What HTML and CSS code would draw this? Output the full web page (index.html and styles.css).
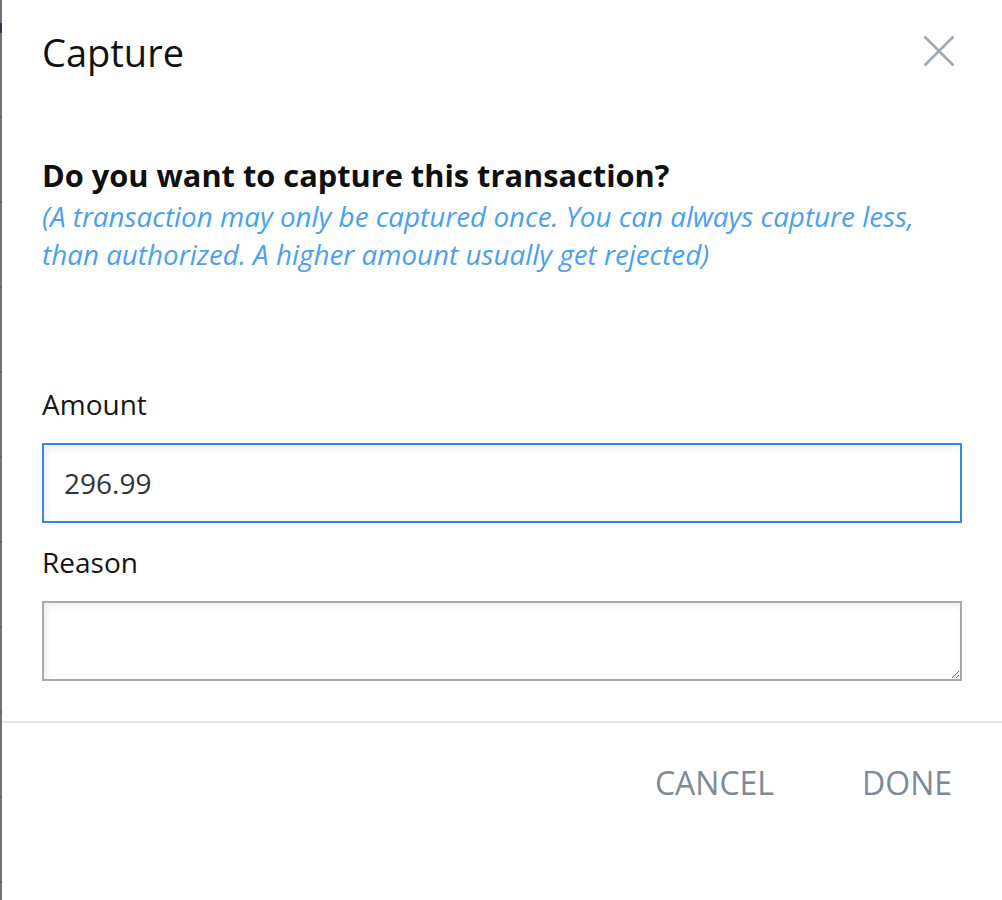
FILE: index.html
```html
<!DOCTYPE html>
<html lang="en">
<head>
<meta charset="utf-8">
<title>Capture</title>
<link rel="stylesheet" href="styles.css">
</head>
<body>
<div class="page">
  <div class="backdrop-strip"></div>
  <div class="dialog">
    <header class="dialog-header">
      <h1 class="dialog-title">Capture</h1>
      <button class="close-btn" aria-label="Close">
        <svg width="32" height="32" viewBox="0 0 32 32" aria-hidden="true">
          <path d="M1.5 1.5 L30.5 30.5 M30.5 1.5 L1.5 30.5" stroke="#9ea9b6" stroke-width="2.6" fill="none" stroke-linecap="butt"/>
        </svg>
      </button>
    </header>
    <section class="dialog-body">
      <h2 class="question">Do you want to capture this transaction?</h2>
      <p class="hint">(A transaction may only be captured once. You can always capture less, than authorized. A higher amount usually get rejected)</p>
      <label class="field-label" for="amount">Amount</label>
      <input id="amount" class="field-input focused" type="text" value="296.99">
      <label class="field-label" for="reason">Reason</label>
      <textarea id="reason" class="field-input area"></textarea>
    </section>
    <footer class="dialog-footer">
      <button class="action">CANCEL</button>
      <button class="action">DONE</button>
    </footer>
  </div>
</div>
</body>
</html>
```

FILE: styles.css
```css
html, body {
  margin: 0;
  padding: 0;
  background: #ffffff;
}

body {
  font-family: "Open Sans", "Liberation Sans", sans-serif;
  color: #111111;
}

.page {
  display: flex;
  min-height: 900px;
}

.backdrop-strip {
  width: 2px;
  flex: 0 0 2px;
  background:
    linear-gradient(#6d7178, #6d7178) 0 0 / 2px 23px no-repeat,
    linear-gradient(#2c3a4b, #2c3a4b) 0 23px / 2px 10px no-repeat,
    repeating-linear-gradient(to bottom, #6f737a 0, #6f737a 83px, #5c6169 83px, #5c6169 85px) 0 33px / 2px 100% no-repeat;
}

.dialog {
  flex: 1;
  display: flex;
  flex-direction: column;
  background: #ffffff;
}

.dialog-header {
  display: flex;
  align-items: center;
  justify-content: space-between;
  padding: 25px 47px 0 40px;
  height: 54px;
}

.dialog-title {
  margin: 0;
  font-size: 38px;
  font-weight: 400;
  line-height: 52px;
  color: #111111;
}

.close-btn {
  border: none;
  background: none;
  padding: 0;
  width: 32px;
  height: 32px;
  margin-top: -3px;
  cursor: pointer;
}

.close-btn svg {
  display: block;
}

.dialog-body {
  display: flex;
  flex-direction: column;
  padding: 77px 40px 0 40px;
}

.question {
  margin: 0;
  font-size: 30.75px;
  font-weight: 700;
  line-height: 38px;
  color: #0f0f0f;
}

.hint {
  margin: 3px 0 0 0;
  font-size: 27.8px;
  font-style: italic;
  line-height: 38px;
  color: #4a9ff0;
}

.field-label {
  display: block;
  margin-top: 112px;
  font-size: 28px;
  line-height: 38px;
  color: #161616;
}

.focused {
  margin-top: 20px;
}

.focused + .field-label {
  margin-top: 20px;
}

.field-input {
  box-sizing: border-box;
  width: 100%;
  height: 80px;
  padding: 0 20px;
  font-family: "Open Sans", "Liberation Sans", sans-serif;
  font-size: 28px;
  color: #333333;
  background: #ffffff;
  border: 2px solid #a9a9a9;
  border-radius: 0;
  outline: none;
  box-shadow: inset 3px 3px 7px rgba(0, 0, 0, 0.07);
}

.field-input.focused {
  border-color: #3a86d8;
}

.field-input.area {
  display: block;
  margin-top: 20px;
  resize: vertical;
  padding: 10px 20px;
}

.dialog-footer {
  margin-top: 40px;
  border-top: 2px solid #e5e9ee;
  display: flex;
  justify-content: flex-end;
  gap: 56px;
  padding: 38px 34px 0 0;
}

.action {
  border: none;
  background: none;
  padding: 0 16px;
  font-family: "Open Sans", "Liberation Sans", sans-serif;
  font-size: 32px;
  line-height: 44px;
  color: #7d899d;
  cursor: pointer;
}
```
